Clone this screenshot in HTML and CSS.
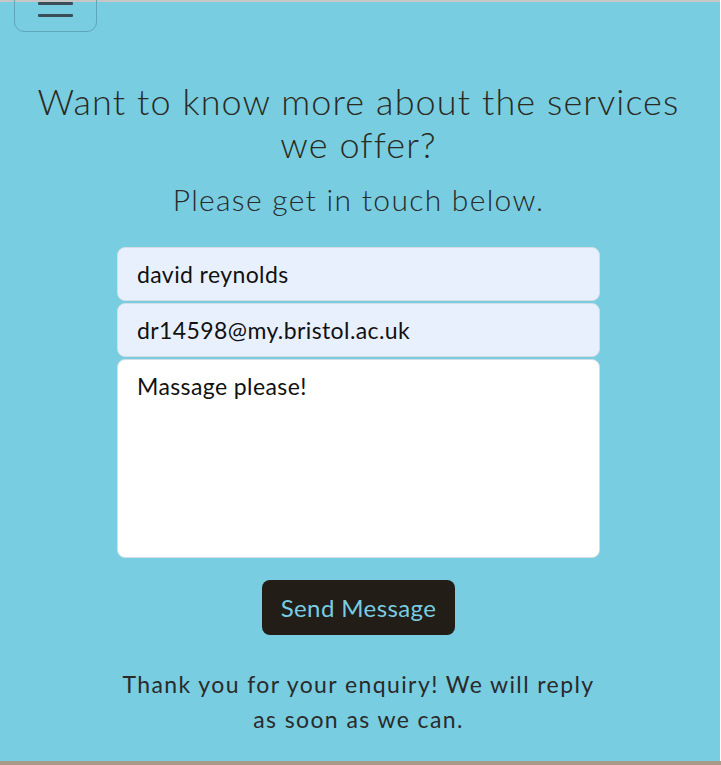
FILE: index.html
```html
<!DOCTYPE html>
<html>
<head>
<meta charset="utf-8">
<link rel="stylesheet" href="styles.css">
</head>
<body>
<div class="page">
  <header class="topbar">
    <button class="toggler" aria-label="menu">
      <span class="bar"></span>
      <span class="bar"></span>
      <span class="bar"></span>
    </button>
  </header>
  <main class="contact">
    <h1 class="title">Want to know more about the services we offer?</h1>
    <h2 class="subtitle">Please get in touch below.</h2>
    <form class="form">
      <input class="field" type="text" value="david reynolds">
      <input class="field" type="email" value="dr14598@my.bristol.ac.uk">
      <textarea class="field area">Massage please!</textarea>
      <button class="send" type="button">Send Message</button>
    </form>
    <p class="thanks">Thank you for your enquiry! We will reply as soon as we can.</p>
  </main>
</div>
<div class="floor"></div>
</body>
</html>
```
FILE: styles.css
```css
html, body {
  margin: 0;
  padding: 0;
  background: #ffffff;
}
body {
  font-family: "Lato", "Open Sans", sans-serif;
  color: #222;
  overflow: hidden;
}
.page {
  width: 720px;
  height: 759px;
  background: #78cde1;
  border-top: 2px solid #c6c6c6;
  box-sizing: content-box;
}
.floor {
  height: 4px;
  width: 721px;
  background: #a89a88;
}
.topbar {
  height: 30px;
  padding-left: 14px;
}
.toggler {
  display: flex;
  flex-direction: column;
  gap: 9px;
  align-items: center;
  justify-content: flex-end;
  width: 83px;
  height: 52px;
  margin-top: -22px;
  padding: 0 0 14px;
  background: transparent;
  border: 1px solid #5fa6b8;
  border-radius: 10px;
  box-sizing: border-box;
}
.bar {
  display: block;
  width: 35px;
  height: 3px;
  background: #3b4d57;
  border-radius: 1px;
}
.contact {
  display: flex;
  flex-direction: column;
  align-items: center;
  padding-top: 70px;
  padding-right: 3px;
}
.title {
  margin: 0;
  width: 660px;
  text-align: center;
  font-weight: 300;
  font-size: 36px;
  line-height: 43px;
  letter-spacing: 1.1px;
  color: #2a2a22;
}
.subtitle {
  margin: 15px 0 0;
  text-align: center;
  font-weight: 300;
  font-size: 30px;
  line-height: 36px;
  letter-spacing: 1.3px;
  color: #2a2a2a;
}
.form {
  margin-top: 30px;
  display: flex;
  flex-direction: column;
  align-items: center;
  gap: 2px;
}
.field {
  width: 483px;
  height: 54px;
  box-sizing: border-box;
  background: #e8f0fe;
  border: 1px solid #d4dde3;
  border-radius: 8px;
  padding: 0 19px;
  font-family: "Lato", sans-serif;
  font-size: 23px;
  letter-spacing: 0.4px;
  color: #111;
  outline: none;
}
.area {
  height: 199px;
  background: #ffffff;
  resize: none;
  padding-top: 12px;
  line-height: 28px;
}
.send {
  margin-top: 20px;
  width: 193px;
  height: 55px;
  background: #231d18;
  color: #78cde1;
  border: none;
  border-radius: 8px;
  font-family: "Lato", sans-serif;
  font-size: 24px;
  letter-spacing: 0.4px;
}
.thanks {
  margin: 32px 0 0;
  width: 480px;
  text-align: center;
  font-size: 23px;
  line-height: 35px;
  letter-spacing: 1.4px;
  font-weight: 400;
  color: #2a2a2a;
}
```
